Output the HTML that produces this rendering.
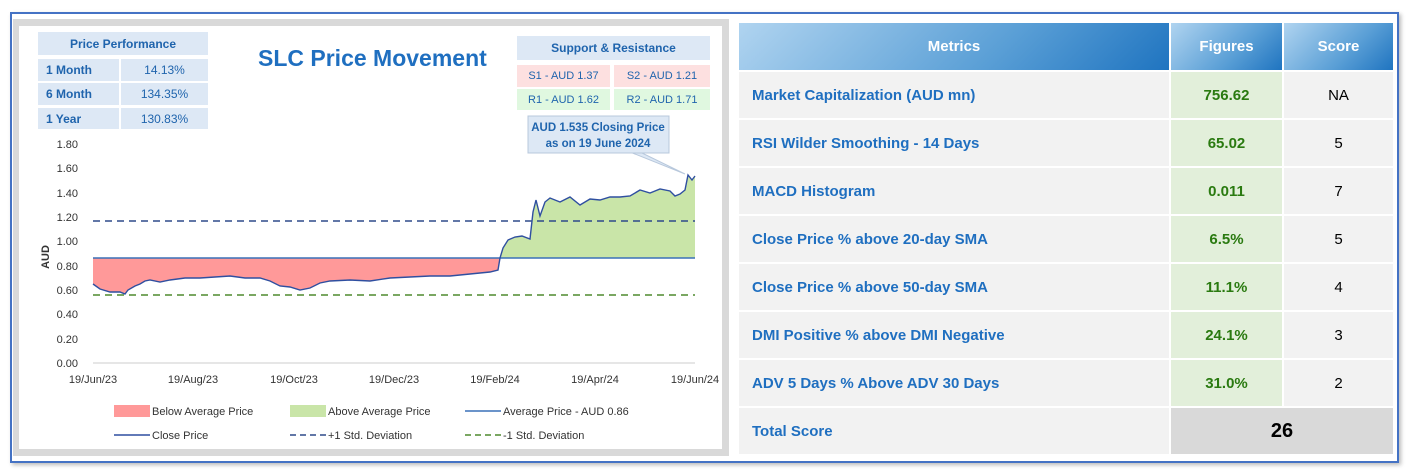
<!DOCTYPE html>
<html><head><meta charset="utf-8"><style>
*{margin:0;padding:0;box-sizing:border-box}
body{width:1410px;height:473px;background:#fff;position:relative;overflow:hidden;font-family:"Liberation Sans",sans-serif}
.a{position:absolute}
.outer{left:10px;top:12px;width:1389px;height:451px;border:2px solid #4472c4;box-shadow:2px 2px 4px #bbb}
.gray{left:13px;top:19px;width:716px;height:437px;background:#d9d9d9}
.white{left:19px;top:26px;width:703px;height:423px;background:#fff}
.pp{background:#dde8f5;color:#1f64ad;font-weight:bold;font-size:12px;display:flex;align-items:center}
.t{font-size:11px;color:#333}
.cell{position:absolute;display:flex;align-items:center;font-size:15px;font-weight:bold}
</style></head><body>
<div class="a outer"></div>
<div class="a gray"></div>
<div class="a white"></div>

<div class="a pp" style="left:38px;top:32px;width:170px;height:23px;justify-content:center">Price Performance</div>
<div class="a pp" style="left:38px;top:59px;width:81px;height:22px;padding-left:8px">1 Month</div>
<div class="a pp" style="left:121px;top:59px;width:87px;height:22px;justify-content:center;font-weight:normal">14.13%</div>
<div class="a pp" style="left:38px;top:83px;width:81px;height:22px;padding-left:8px">6 Month</div>
<div class="a pp" style="left:121px;top:83px;width:87px;height:22px;justify-content:center;font-weight:normal">134.35%</div>
<div class="a pp" style="left:38px;top:108px;width:81px;height:21px;padding-left:8px">1 Year</div>
<div class="a pp" style="left:121px;top:108px;width:87px;height:21px;justify-content:center;font-weight:normal">130.83%</div>

<div class="a" style="left:258px;top:45px;font-size:23px;font-weight:bold;color:#1f6fc0">SLC Price Movement</div>

<div class="a pp" style="left:517px;top:36px;width:193px;height:24px;justify-content:center">Support &amp; Resistance</div>
<div class="a" style="left:517px;top:65px;width:93px;height:22px;background:#fde0e0;color:#1f64ad;font-size:11px;display:flex;align-items:center;justify-content:center">S1 - AUD 1.37</div>
<div class="a" style="left:614px;top:65px;width:96px;height:22px;background:#fde0e0;color:#1f64ad;font-size:11px;display:flex;align-items:center;justify-content:center">S2 - AUD 1.21</div>
<div class="a" style="left:517px;top:89px;width:93px;height:21px;background:#e0f8e0;color:#1f64ad;font-size:11px;display:flex;align-items:center;justify-content:center">R1 - AUD 1.62</div>
<div class="a" style="left:614px;top:89px;width:96px;height:21px;background:#e0f8e0;color:#1f64ad;font-size:11px;display:flex;align-items:center;justify-content:center">R2 - AUD 1.71</div>

<svg class="a" style="left:0;top:0" width="730" height="473">
<polygon points="630,152 685,174 640,152" fill="#dde8f5" stroke="#b8c8dc"/>
<rect x="528" y="116" width="141" height="37" fill="#dde8f5" stroke="#b8c8dc"/>
<text x="598" y="131" font-size="11.5" font-weight="bold" fill="#1f64ad" text-anchor="middle" font-family="Liberation Sans">AUD 1.535 Closing Price</text>
<text x="598" y="147" font-size="11.5" font-weight="bold" fill="#1f64ad" text-anchor="middle" font-family="Liberation Sans">as on 19 June 2024</text>
<g font-family="Liberation Sans" font-size="11" fill="#333" text-anchor="end">
<text x="78" y="148">1.80</text><text x="78" y="172">1.60</text><text x="78" y="197">1.40</text><text x="78" y="221">1.20</text><text x="78" y="245">1.00</text><text x="78" y="270">0.80</text><text x="78" y="294">0.60</text><text x="78" y="318">0.40</text><text x="78" y="343">0.20</text><text x="78" y="367">0.00</text>
</g>
<text x="49" y="257" font-family="Liberation Sans" font-size="11" font-weight="bold" fill="#333" transform="rotate(-90 49 257)" text-anchor="middle">AUD</text>
<polygon fill="#ff9999" points="93,258 93,284 100,289 110,292 120,292 125,294 128,290 135,286 140,284 145,281 150,280 160,282 170,280 185,278 200,278 215,277 230,276 245,278 260,278 270,281 280,286 290,287 300,290 310,288 320,283 330,281 350,280 370,281 390,278 410,277 430,276 450,276 470,274 490,272 498,270 500,258"/>
<polygon fill="#c9e5a8" points="500,258 503,248 508,240 515,237 522,236 530,239 533,212 536,200 540,216 545,202 550,198 560,202 570,197 580,205 590,199 600,200 610,197 620,197 630,196 640,190 650,193 660,189 670,191 675,196 680,194 685,190 688,175 692,180 695,176 695,258"/>
<line x1="93" y1="221" x2="695" y2="221" stroke="#2e4a8a" stroke-width="1.5" stroke-dasharray="7,5"/>
<line x1="93" y1="295" x2="695" y2="295" stroke="#4e8a2e" stroke-width="1.5" stroke-dasharray="7,5"/>
<line x1="93" y1="258" x2="695" y2="258" stroke="#3a70b8" stroke-width="1.5"/>
<polyline fill="none" stroke="#2f4fa0" stroke-width="1.4" points="93,284 100,289 110,292 120,292 125,294 128,290 135,286 140,284 145,281 150,280 160,282 170,280 185,278 200,278 215,277 230,276 245,278 260,278 270,281 280,286 290,287 300,290 310,288 320,283 330,281 350,280 370,281 390,278 410,277 430,276 450,276 470,274 490,272 498,270 500,258 503,248 508,240 515,237 522,236 530,239 533,212 536,200 540,216 545,202 550,198 560,202 570,197 580,205 590,199 600,200 610,197 620,197 630,196 640,190 650,193 660,189 670,191 675,196 680,194 685,190 688,175 692,180 695,176"/>
<line x1="93" y1="363" x2="695" y2="363" stroke="#ccc"/>
<g font-family="Liberation Sans" font-size="11" fill="#333" text-anchor="middle">
<text x="93" y="383">19/Jun/23</text><text x="193" y="383">19/Aug/23</text><text x="294" y="383">19/Oct/23</text><text x="394" y="383">19/Dec/23</text><text x="495" y="383">19/Feb/24</text><text x="595" y="383">19/Apr/24</text><text x="695" y="383">19/Jun/24</text>
</g>
<rect x="114" y="405" width="36" height="12" fill="#ff9999"/>
<rect x="290" y="405" width="36" height="12" fill="#c9e5a8"/>
<line x1="465" y1="411" x2="501" y2="411" stroke="#3a70b8" stroke-width="1.5"/>
<line x1="114" y1="435" x2="150" y2="435" stroke="#2f4fa0" stroke-width="1.5"/>
<line x1="290" y1="435" x2="326" y2="435" stroke="#2e4a8a" stroke-width="1.5" stroke-dasharray="6,4"/>
<line x1="465" y1="435" x2="501" y2="435" stroke="#4e8a2e" stroke-width="1.5" stroke-dasharray="6,4"/>
<g font-family="Liberation Sans" font-size="11" fill="#333">
<text x="152" y="415">Below Average Price</text><text x="328" y="415">Above Average Price</text><text x="503" y="415">Average Price - AUD 0.86</text>
<text x="152" y="439">Close Price</text><text x="328" y="439">+1 Std. Deviation</text><text x="503" y="439">-1 Std. Deviation</text>
</g>
</svg>

<div class="a" style="left:739px;top:23px;width:430px;height:47px;background:linear-gradient(135deg,#b0d4f0 0%,#5a9fd6 60%,#1f74c0 100%)"></div>
<div class="a" style="left:1171px;top:23px;width:111px;height:47px;background:linear-gradient(135deg,#b0d4f0 0%,#5a9fd6 60%,#1f74c0 100%)"></div>
<div class="a" style="left:1284px;top:23px;width:109px;height:47px;background:linear-gradient(135deg,#b0d4f0 0%,#5a9fd6 60%,#1f74c0 100%)"></div>
<div class="cell" style="left:739px;top:23px;width:430px;height:47px;justify-content:center;color:#fff">Metrics</div>
<div class="cell" style="left:1171px;top:23px;width:111px;height:47px;justify-content:center;color:#fff">Figures</div>
<div class="cell" style="left:1284px;top:23px;width:109px;height:47px;justify-content:center;color:#fff">Score</div>

<div id="rows"></div>
<div class="a" style="left:739px;top:72px;width:430px;height:46px;background:#f2f2f2"></div><div class="cell" style="left:752px;top:72px;height:46px;color:#1f6fc0">Market Capitalization (AUD mn)</div><div class="cell" style="left:1171px;top:72px;width:111px;height:46px;background:#e2efda;color:#2a7a10;justify-content:center">756.62</div><div class="cell" style="left:1284px;top:72px;width:109px;height:46px;background:#f2f2f2;font-weight:normal;justify-content:center;color:#000">NA</div>
<div class="a" style="left:739px;top:120px;width:430px;height:46px;background:#f2f2f2"></div><div class="cell" style="left:752px;top:120px;height:46px;color:#1f6fc0">RSI Wilder Smoothing - 14 Days</div><div class="cell" style="left:1171px;top:120px;width:111px;height:46px;background:#e2efda;color:#2a7a10;justify-content:center">65.02</div><div class="cell" style="left:1284px;top:120px;width:109px;height:46px;background:#f2f2f2;font-weight:normal;justify-content:center;color:#000">5</div>
<div class="a" style="left:739px;top:168px;width:430px;height:46px;background:#f2f2f2"></div><div class="cell" style="left:752px;top:168px;height:46px;color:#1f6fc0">MACD Histogram</div><div class="cell" style="left:1171px;top:168px;width:111px;height:46px;background:#e2efda;color:#2a7a10;justify-content:center">0.011</div><div class="cell" style="left:1284px;top:168px;width:109px;height:46px;background:#f2f2f2;font-weight:normal;justify-content:center;color:#000">7</div>
<div class="a" style="left:739px;top:216px;width:430px;height:46px;background:#f2f2f2"></div><div class="cell" style="left:752px;top:216px;height:46px;color:#1f6fc0">Close Price % above 20-day SMA</div><div class="cell" style="left:1171px;top:216px;width:111px;height:46px;background:#e2efda;color:#2a7a10;justify-content:center">6.5%</div><div class="cell" style="left:1284px;top:216px;width:109px;height:46px;background:#f2f2f2;font-weight:normal;justify-content:center;color:#000">5</div>
<div class="a" style="left:739px;top:264px;width:430px;height:46px;background:#f2f2f2"></div><div class="cell" style="left:752px;top:264px;height:46px;color:#1f6fc0">Close Price % above 50-day SMA</div><div class="cell" style="left:1171px;top:264px;width:111px;height:46px;background:#e2efda;color:#2a7a10;justify-content:center">11.1%</div><div class="cell" style="left:1284px;top:264px;width:109px;height:46px;background:#f2f2f2;font-weight:normal;justify-content:center;color:#000">4</div>
<div class="a" style="left:739px;top:312px;width:430px;height:46px;background:#f2f2f2"></div><div class="cell" style="left:752px;top:312px;height:46px;color:#1f6fc0">DMI Positive % above DMI Negative</div><div class="cell" style="left:1171px;top:312px;width:111px;height:46px;background:#e2efda;color:#2a7a10;justify-content:center">24.1%</div><div class="cell" style="left:1284px;top:312px;width:109px;height:46px;background:#f2f2f2;font-weight:normal;justify-content:center;color:#000">3</div>
<div class="a" style="left:739px;top:360px;width:430px;height:46px;background:#f2f2f2"></div><div class="cell" style="left:752px;top:360px;height:46px;color:#1f6fc0">ADV 5 Days % Above ADV 30 Days</div><div class="cell" style="left:1171px;top:360px;width:111px;height:46px;background:#e2efda;color:#2a7a10;justify-content:center">31.0%</div><div class="cell" style="left:1284px;top:360px;width:109px;height:46px;background:#f2f2f2;font-weight:normal;justify-content:center;color:#000">2</div>
<div class="a" style="left:739px;top:408px;width:430px;height:46px;background:#f2f2f2"></div><div class="cell" style="left:752px;top:408px;height:46px;color:#1f6fc0">Total Score</div><div class="cell" style="left:1171px;top:408px;width:222px;height:46px;background:#d9d9d9;color:#000;justify-content:center;font-size:20px">26</div>
</body></html>
